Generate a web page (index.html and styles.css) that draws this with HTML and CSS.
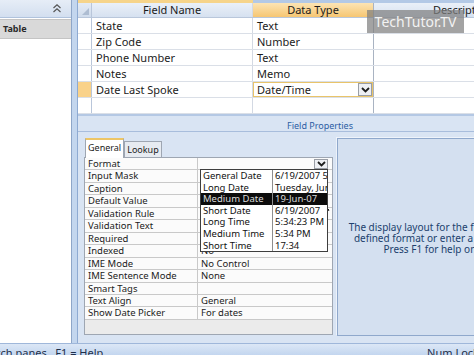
FILE: index.html
```html
<!DOCTYPE html>
<html lang="en">
<head>
  <meta charset="UTF-8" />
  <title>Table Design</title>
  <link rel="stylesheet" href="styles.css">
</head>
<body>
<div class="app">
  <div class="main">
    <aside class="nav">
      <div class="nav-head">
        <svg width="8" height="9" viewBox="0 0 8 9"><polyline points="0.5,4 4,0.8 7.5,4" /><polyline points="0.5,8 4,4.8 7.5,8" /></svg>
      </div>
      <div class="nav-group">Table</div>
    </aside>
    <div class="split"></div>

    <section class="design">
      <div class="grid">
        <div class="strip"><span class="strip-a"></span><span class="strip-b"></span></div>
        <div class="row head">
          <div class="sel corner"></div>
          <div>Field Name</div>
          <div class="head-active">Data Type</div>
          <div>Description</div>
        </div>
        <div class="row"><div class="sel"></div><div>State</div><div>Text</div><div></div></div>
        <div class="row"><div class="sel"></div><div>Zip Code</div><div>Number</div><div></div></div>
        <div class="row"><div class="sel"></div><div>Phone Number</div><div>Text</div><div></div></div>
        <div class="row"><div class="sel"></div><div>Notes</div><div>Memo</div><div></div></div>
        <div class="row">
          <div class="sel current"></div>
          <div>Date Last Spoke</div>
          <div class="combo"><span>Date/Time</span><span class="drop-btn big"><svg width="9" height="6" viewBox="0 0 9 6"><polyline points="1,1 4.5,4.5 8,1" /></svg></span></div>
          <div></div>
        </div>
        <div class="row"><div class="sel"></div><div></div><div></div><div></div></div>
      </div>

      <div class="lower">
        <div class="fp-title">Field Properties</div>
        <div class="fp-body">
          <div class="sheet-wrap">
            <div class="tabs">
              <div class="tab on">General</div>
              <div class="tab">Lookup</div>
            </div>
            <div class="sheet">
              <div class="prop"><div>Format</div><div class="combo"><span></span><span class="drop-btn"><svg width="9" height="6" viewBox="0 0 9 6"><polyline points="1,1 4.5,4.5 8,1" /></svg></span></div></div>
              <div class="prop"><div>Input Mask</div><div></div></div>
              <div class="prop"><div>Caption</div><div></div></div>
              <div class="prop"><div>Default Value</div><div></div></div>
              <div class="prop"><div>Validation Rule</div><div></div></div>
              <div class="prop"><div>Validation Text</div><div></div></div>
              <div class="prop"><div>Required</div><div>No</div></div>
              <div class="prop"><div>Indexed</div><div>No</div></div>
              <div class="prop"><div>IME Mode</div><div>No Control</div></div>
              <div class="prop"><div>IME Sentence Mode</div><div>None</div></div>
              <div class="prop"><div>Smart Tags</div><div></div></div>
              <div class="prop"><div>Text Align</div><div>General</div></div>
              <div class="prop"><div>Show Date Picker</div><div>For dates</div></div>

              <div class="dropdown">
                <div class="opt"><span>General Date</span><span>6/19/2007 5:34:23 PM</span></div>
                <div class="opt"><span>Long Date</span><span>Tuesday, June 19, 2007</span></div>
                <div class="opt picked"><span>Medium Date</span><span>19-Jun-07</span></div>
                <div class="opt"><span>Short Date</span><span>6/19/2007</span></div>
                <div class="opt"><span>Long Time</span><span>5:34:23 PM</span></div>
                <div class="opt"><span>Medium Time</span><span>5:34 PM</span></div>
                <div class="opt"><span>Short Time</span><span>17:34</span></div>
              </div>
            </div>
          </div>

          <div class="help">
            <p>The display layout for the field. Select a pre-<br>defined format or enter a custom format.<br>Press F1 for help on formats.</p>
          </div>
        </div>
      </div>
    </section>
  </div>

  <div class="status">
    <span class="status-text">F6 = Switch panes.  F1 = Help.</span>
    <span class="num-lock">Num Lock</span>
  </div>

  <div class="watermark">TechTutor.TV</div>
  <svg class="cursor" width="13" height="20" viewBox="0 0 13 20"><path d="M0.5 0.5 L0.5 15.5 L4 12 L6.6 18 L8.8 17 L6.3 11.2 L11 11.2 Z" /></svg>
</div>
</body>
</html>
```

FILE: styles.css
```css
* {
  box-sizing: border-box;
}

body {
  margin: 0;
  width: 474px;
  height: 355px;
  overflow: hidden;
  font-family: "Noto Sans", "DejaVu Sans", sans-serif;
  font-size: 11px;
  color: #1b1b1b;
  background: #c5d7ee;
}

.app {
  position: relative;
  width: 474px;
  height: 355px;
  overflow: hidden;
  display: grid;
  grid-template-columns: 474px;
  grid-template-rows: 343px 12px;
}

.main {
  display: flex;
  min-width: 0;
  min-height: 0;
}

/* navigation pane */
.nav {
  width: 72px;
  flex: none;
  background: #fff;
  border-right: 1px solid #8ea6c8;
}

.nav-head {
  height: 18px;
  background: linear-gradient(#e6edf7, #d3dfef);
  border-bottom: 1px solid #b0c3dd;
  display: flex;
  justify-content: flex-end;
  align-items: center;
  padding-right: 10px;
}

.nav-head svg polyline {
  fill: none;
  stroke: #555;
  stroke-width: 1.2;
}

.nav-group {
  height: 20px;
  margin-top: 1px;
  background: #d9d9d9;
  border-top: 1px solid #c4c4c4;
  border-bottom: 1px solid #c4c4c4;
  font-weight: bold;
  font-size: 9px;
  line-height: 18px;
  padding-left: 3px;
  color: #2a2a2a;
}

.split {
  width: 5px;
  flex: none;
  background: #c3d6ee;
}

/* design grid */
.design {
  flex: 1;
  min-width: 0;
  overflow: hidden;
  border-left: 1px solid #8eaad2;
  display: flex;
  flex-direction: column;
}

.grid {
  height: 116px;
  flex: none;
  background: #fff;
  border-bottom: 2px solid #b4c8e4;
}

.strip {
  height: 3px;
  display: flex;
}

.strip-a {
  width: 175px;
  background: #f6d48a;
}

.strip-b {
  flex: 1;
  background: #b3c9e6;
}

.row {
  display: grid;
  grid-template-columns: 14px 161px 121px 178px;
  height: 16px;
  border-bottom: 1px solid #dadfe7;
}

.row > div {
  border-right: 1px solid #d3d9e3;
  padding-left: 4px;
  line-height: 15px;
  white-space: nowrap;
  overflow: hidden;
}

.row > div:nth-child(3) {
  border-right-color: #a9b3c2;
}

.row.head {
  height: 15px;
  border-bottom-color: #b9c7db;
}

.row.head > div {
  padding-left: 0;
  text-align: center;
  line-height: 14px;
  background: linear-gradient(#eaf0f8, #d6e1f0);
}

.row.head > .head-active {
  background: linear-gradient(#fce4b4, #f6c672);
}

.row > .sel {
  padding: 0;
  border-right-color: #b9c6da;
}

.row.head > .corner {
  position: relative;
  background: linear-gradient(#e4ebf5, #d0dcec);
}

.corner::after {
  content: "";
  position: absolute;
  right: 2px;
  bottom: 2px;
  border-left: 7px solid transparent;
  border-bottom: 7px solid #aebdd2;
}

.row > .current {
  background: #f9d28a;
}

.combo {
  display: flex;
  justify-content: space-between;
  align-items: center;
}

.row > .combo {
  box-shadow: inset 0 0 0 1px #e9c46a;
  padding-right: 1px;
}

.drop-btn {
  width: 14px;
  height: 10px;
  display: flex;
  align-items: center;
  justify-content: center;
  background: #eef0f4;
  border: 1px solid #9a9ea6;
}

.drop-btn.big {
  width: 14px;
  height: 13px;
}

.drop-btn polyline {
  fill: none;
  stroke: #1e1e1e;
  stroke-width: 1.8;
}

/* field properties */
.lower {
  flex: 1;
  background: #d9e4f3;
}

.fp-title {
  height: 16px;
  border-bottom: 1px solid #a8bddc;
  padding: 4px 0 0 209px;
  color: #2c5da3;
  font-size: 9px;
  line-height: 11px;
}

.fp-body {
  display: flex;
  gap: 4px;
  padding: 6px 0 0 6px;
}

.sheet-wrap {
  width: 249px;
  flex: none;
}

.tabs {
  display: flex;
  align-items: flex-end;
  height: 19px;
  padding-left: 1px;
  font-size: 9px;
}

.tab {
  height: 16px;
  padding: 0 2px;
  line-height: 15px;
  background: #e7ebf1;
  border: 1px solid #9ea6b2;
  border-bottom: none;
}

.tab.on {
  height: 20px;
  margin-bottom: -1px;
  position: relative;
  z-index: 1;
  background: #fff;
  border-top: 2px solid #edc565;
  line-height: 16px;
}

.sheet {
  position: relative;
  height: 178px;
  border: 1px solid #9ea6b2;
  background: #ebebeb;
  font-size: 9.5px;
}

.prop {
  display: grid;
  grid-template-columns: 113px 1fr;
  height: 12.46px;
  border-bottom: 1px solid #c9c9c9;
  background: #fbfbfb;
}

.prop > div {
  padding-left: 3px;
  line-height: 11.4px;
  white-space: nowrap;
}

.prop > div:first-child {
  border-right: 1px solid #c9c9c9;
}

.prop > .combo {
  padding-right: 4px;
}

.dropdown {
  position: absolute;
  left: 115px;
  top: 11px;
  width: 128px;
  height: 83px;
  background: #fff;
  border: 1px solid #3e3e3e;
  overflow: hidden;
  z-index: 2;
}

.opt {
  display: grid;
  grid-template-columns: 72px 1fr;
  height: 11.6px;
  line-height: 11.6px;
  white-space: nowrap;
  color: #111;
}

.opt span {
  padding-left: 2px;
}

.opt span:first-child {
  border-right: 1px solid #8e8e8e;
}

.opt.picked {
  background: #0c0c0c;
  color: #dcdcdc;
}

.help {
  width: 228px;
  height: 198px;
  flex: none;
  display: flex;
  align-items: center;
  justify-content: center;
  background: #d4e0f0;
  border: 1px solid #8fa8cc;
  box-shadow: -1px -1px 0 #eef3fa;
}

.help p {
  margin: 2px 0 0;
  white-space: nowrap;
  text-align: center;
  font-size: 10px;
  line-height: 11px;
  color: #203f6d;
}

/* status bar */
.status {
  display: flex;
  justify-content: space-between;
  border-top: 1px solid #9fb7da;
  background: linear-gradient(#dce7f6, #c3d6ef);
  padding-top: 3px;
  line-height: 12px;
  white-space: pre;
  overflow: hidden;
  color: #1e2f4a;
}

.status-text {
  margin-left: -45px;
}

.num-lock {
  margin-right: -5px;
}

/* overlays */
.watermark {
  position: absolute;
  left: 367px;
  top: 10px;
  width: 97px;
  height: 23px;
  background: rgba(128, 128, 128, 0.72);
  color: #f2f2f2;
  font-size: 14px;
  line-height: 23px;
  text-align: center;
  white-space: nowrap;
}

.cursor {
  position: absolute;
  left: 318px;
  top: 199px;
}

.cursor path {
  fill: #fff;
  stroke: #000;
  stroke-width: 1;
}
```
